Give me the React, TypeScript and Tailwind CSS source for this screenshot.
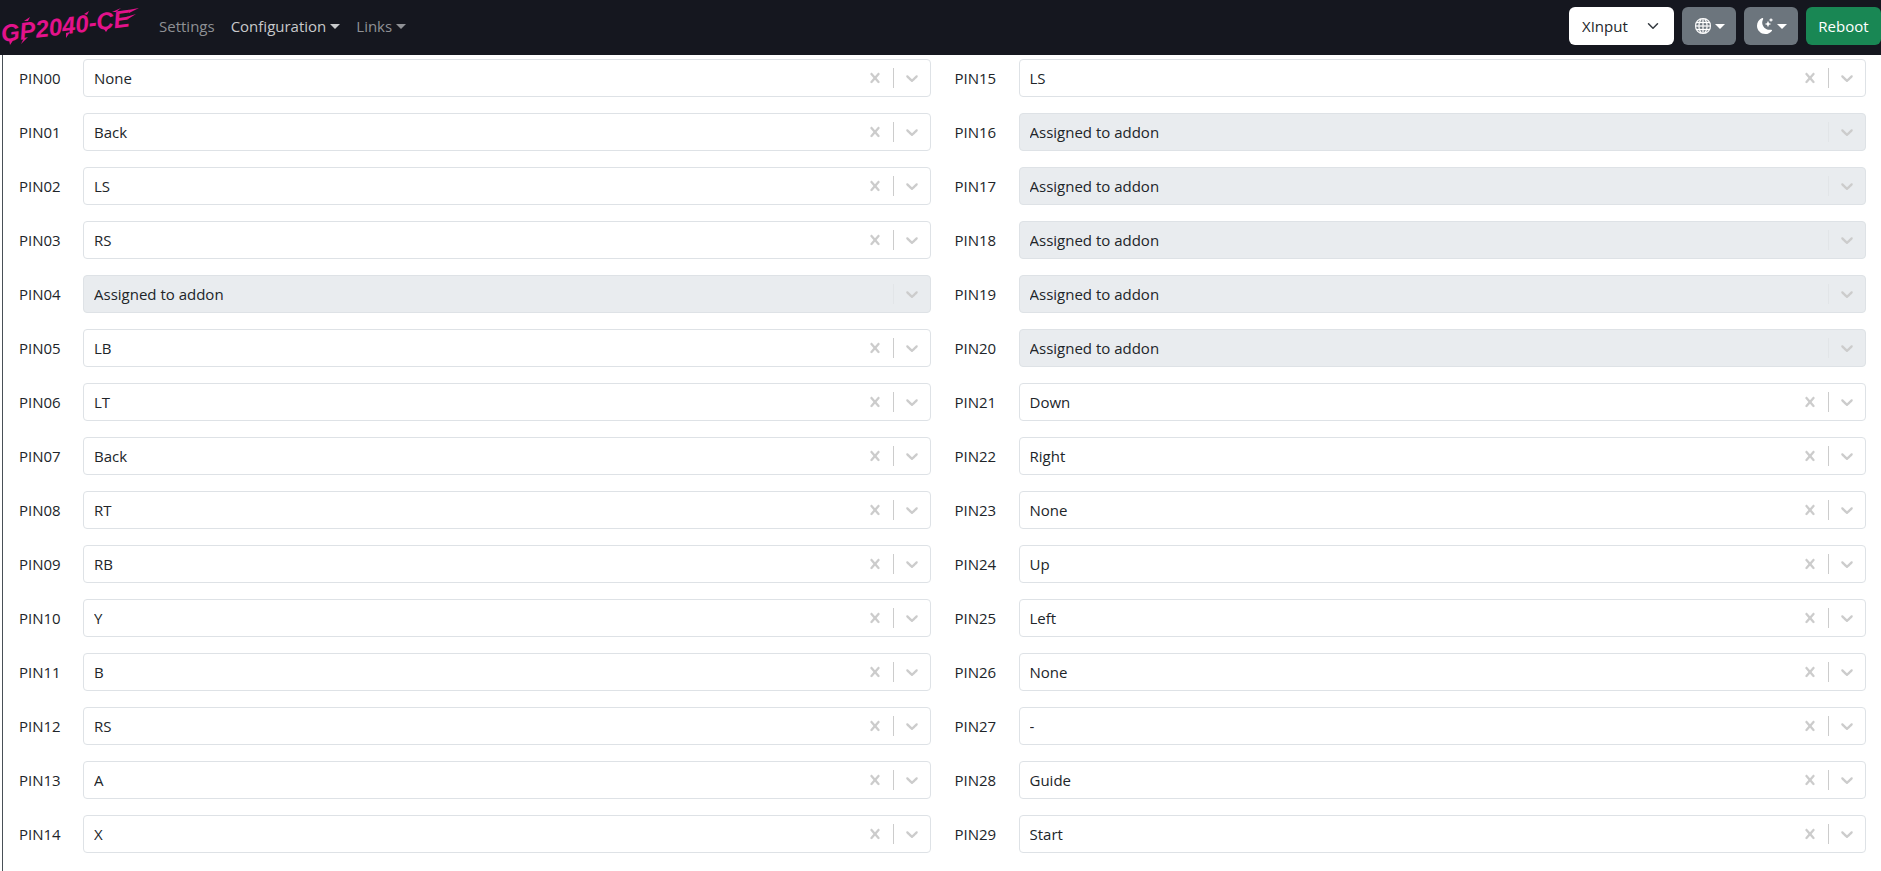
import React, { useState } from 'react';
import { BsGlobe, BsMoonStarsFill } from 'react-icons/bs';

const ADDON = 'Assigned to addon';

const ACTIONS = ['None', '-', 'Up', 'Down', 'Left', 'Right', 'A', 'B', 'X', 'Y', 'LB', 'RB', 'LT', 'RT', 'LS', 'RS', 'Back', 'Start', 'Guide'];

const DEFAULT_PINS = [
  'None', 'Back', 'LS', 'RS', ADDON, 'LB', 'LT', 'Back', 'RT', 'RB',
  'Y', 'B', 'RS', 'A', 'X', 'LS', ADDON, ADDON, ADDON, ADDON,
  ADDON, 'Down', 'Right', 'None', 'Up', 'Left', 'None', '-', 'Guide', 'Start',
];

const Caret = () => (
  <svg width="10" height="5" viewBox="0 0 10 5" fill="currentColor" aria-hidden="true">
    <path d="M0 0h10L5 5z" />
  </svg>
);

const Logo = () => (
  <svg width="142" height="52" viewBox="0 0 142 52" role="img" aria-label="GP2040-CE">
    <g fill="#e3128b">
      <text
        x="2"
        y="42"
        transform="rotate(-7 2 42)"
        fontFamily="'Liberation Sans', sans-serif"
        fontSize="24"
        fontWeight="700"
        fontStyle="italic"
      >
        GP2040-CE
      </text>
      {/* brush streaks */}
      <path d="M9 40l5-1-4 6zM24 38l4-1-7 7zM66 33l4-1-4 6zM24 21l6-4-2 4zM84 14l5-3-2 4zM112 12l9-4-5 4zM128 10l11-2-10 5zM126 17l10-3-8 5zM104 29l4 0-2 3z" />
    </g>
  </svg>
);

interface PinSelectProps {
  id: string;
  value: string;
  onChange: (value: string) => void;
}

const PinSelect: React.FC<PinSelectProps> = ({ id, value, onChange }) => {
  const disabled = value === ADDON;

  return (
    <div className={`flex grow items-center h-[38px] rounded border border-[#dee2e6] ${disabled ? 'bg-[#e9ecef]' : 'bg-white'}`}>
      <select
        id={id}
        value={value}
        disabled={disabled}
        onChange={(e) => onChange(e.target.value)}
        className="grow h-full min-w-0 pl-[10px] appearance-none bg-transparent text-[#212529] opacity-100 outline-none"
      >
        {disabled && <option>{ADDON}</option>}
        {ACTIONS.map((action) => (
          <option key={action}>{action}</option>
        ))}
      </select>
      {!disabled && (
        <button type="button" aria-label="Clear" className="p-2 text-[#cccccc]" onClick={() => onChange('None')}>
          <svg width="20" height="20" viewBox="0 0 20 20" fill="currentColor">
            <path d="M14.348 14.849c-0.469 0.469-1.229 0.469-1.697 0l-2.651-3.030-2.651 3.029c-0.469 0.469-1.229 0.469-1.697 0-0.469-0.469-0.469-1.229 0-1.697l2.758-3.15-2.759-3.152c-0.469-0.469-0.469-1.228 0-1.697s1.228-0.469 1.697 0l2.652 3.031 2.651-3.031c0.469-0.469 1.228-0.469 1.697 0s0.469 1.229 0 1.697l-2.758 3.152 2.758 3.15c0.469 0.469 0.469 1.229 0 1.698z" />
          </svg>
        </button>
      )}
      <span className={`w-px h-5 ${disabled ? 'bg-[#e2e5e8]' : 'bg-[#cccccc]'}`} />
      <span className="p-2 text-[#cccccc]">
        <svg width="20" height="20" viewBox="0 0 20 20" fill="currentColor" aria-hidden="true">
          <path d="M4.516 7.548c0.436-0.446 1.043-0.481 1.576 0l3.908 3.747 3.908-3.747c0.533-0.481 1.141-0.446 1.574 0 0.436 0.445 0.408 1.197 0 1.615-0.406 0.418-4.695 4.502-4.695 4.502-0.217 0.223-0.502 0.335-0.787 0.335s-0.57-0.112-0.789-0.335c0 0-4.287-4.084-4.695-4.502s-0.436-1.17 0-1.615z" />
        </svg>
      </span>
    </div>
  );
};

const Navbar = () => (
  <nav className="flex items-center justify-between h-[55px] pb-[3px] bg-[#15171f] text-[#8f9195]">
    <div className="flex items-center gap-4">
      <a href="#home" className="w-[143px]">
        <Logo />
      </a>
      <a href="#settings">Settings</a>
      <button type="button" className="flex items-center gap-1 text-[#c8c9cb]">
        Configuration <Caret />
      </button>
      <button type="button" className="flex items-center gap-1">
        Links <Caret />
      </button>
    </div>
    <div className="flex items-center gap-2">
      <div className="flex items-center h-[38px] w-[105px] px-[13px] rounded-md bg-white">
        <select aria-label="Input mode" defaultValue="XInput" className="grow min-w-0 appearance-none bg-transparent text-[#212529] outline-none">
          <option>XInput</option>
          <option>Switch</option>
          <option>PS4</option>
        </select>
        <svg width="16" height="12" viewBox="0 0 16 16" fill="none" stroke="#343a40" strokeWidth="2" strokeLinecap="round" strokeLinejoin="round" aria-hidden="true">
          <path d="m2 5 6 6 6-6" />
        </svg>
      </div>
      <button type="button" aria-label="Language" className="flex items-center gap-1 w-[54px] h-[38px] pl-[13px] rounded-md bg-[#6c757d] text-white">
        <BsGlobe size={16} strokeWidth={0.3} />
        <Caret />
      </button>
      <button type="button" aria-label="Theme" className="flex items-center gap-1 w-[54px] h-[38px] pl-[13px] rounded-md bg-[#6c757d] text-white">
        <BsMoonStarsFill size={16} />
        <Caret />
      </button>
      <button type="button" className="h-[38px] w-[75px] rounded-md bg-[#198754] text-white">
        Reboot
      </button>
    </div>
  </nav>
);

export default function App() {
  const [pins, setPins] = useState(DEFAULT_PINS);

  const updatePin = (index: number, value: string) => {
    setPins(pins.map((pin, i) => (i === index ? value : pin)));
  };

  return (
    <div className="flex flex-col min-h-screen bg-white text-[#212529] text-[15px] leading-6 font-['Open_Sans','Noto_Sans',sans-serif]">
      <Navbar />
      <main className="grow ml-[2px] pt-1 pl-4 pr-[15px] border-l border-[#495057]">
        <div className="grid grid-cols-2 grid-rows-[repeat(15,auto)] grid-flow-col gap-x-6 gap-y-4">
          {pins.map((pin, i) => {
            const name = `PIN${String(i).padStart(2, '0')}`;
            return (
              <div key={name} className="flex items-center">
                <label htmlFor={name} className="w-16 shrink-0">
                  {name}
                </label>
                <PinSelect id={name} value={pin} onChange={(value) => updatePin(i, value)} />
              </div>
            );
          })}
        </div>
      </main>
    </div>
  );
}
